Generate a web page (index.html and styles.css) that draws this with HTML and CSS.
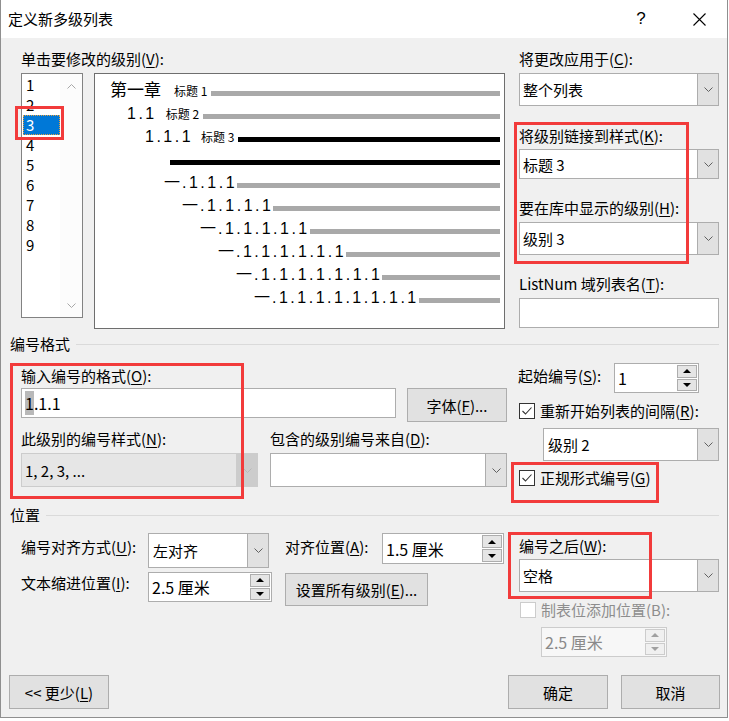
FILE: index.html
```html
<!DOCTYPE html>
<html lang="zh-CN">
<head>
<meta charset="utf-8">
<title>定义新多级列表</title>
<link rel="stylesheet" href="styles.css">
</head>
<body>
<div class="dialog">
  <div class="titlebar">
    <span class="title">定义新多级列表</span>
    <span class="help">?</span>
    <span class="close"><svg width="13" height="13" viewBox="0 0 13 13"><path d="M0.5 0.5L12.5 12.5M12.5 0.5L0.5 12.5" stroke="#000" stroke-width="1.1" fill="none"/></svg></span>
  </div>

  <section class="sec-a">
    <div class="a-left">
      <div class="lbl">单击要修改的级别(<u>V</u>):</div>
      <div class="a-boxes">
        <div class="levels">
          <ul class="level-items">
            <li>1</li><li>2</li><li class="sel">3</li><li>4</li><li>5</li><li>6</li><li>7</li><li>8</li><li>9</li>
          </ul>
          <div class="vscroll">
            <svg width="9" height="5" viewBox="0 0 9 5"><polyline points="0.5,4.5 4.5,0.5 8.5,4.5" fill="none" stroke="#a8a8a8" stroke-width="1"/></svg>
            <svg width="9" height="5" viewBox="0 0 9 5"><polyline points="0.5,0.5 4.5,4.5 8.5,0.5" fill="none" stroke="#a8a8a8" stroke-width="1"/></svg>
          </div>
        </div>
        <div class="preview">
          <div class="pv-row r1"><span class="pv-h1">第一章</span><span class="pv-tag t1">标题 1</span><i class="bar"></i></div>
          <div class="pv-row r2"><span class="pv-num">1.1</span><span class="pv-tag t2">标题 2</span><i class="bar"></i></div>
          <div class="pv-row r3"><span class="pv-num">1.1.1</span><span class="pv-tag t3">标题 3</span><i class="bar black"></i></div>
          <div class="pv-row r4"><i class="bar black"></i></div>
          <div class="pv-row r5"><span class="pv-num"><span class="yi">一</span>.1.1.1</span><i class="bar"></i></div>
          <div class="pv-row r6"><span class="pv-num"><span class="yi">一</span>.1.1.1.1</span><i class="bar"></i></div>
          <div class="pv-row r7"><span class="pv-num"><span class="yi">一</span>.1.1.1.1.1</span><i class="bar"></i></div>
          <div class="pv-row r8"><span class="pv-num"><span class="yi">一</span>.1.1.1.1.1.1</span><i class="bar"></i></div>
          <div class="pv-row r9"><span class="pv-num"><span class="yi">一</span>.1.1.1.1.1.1.1</span><i class="bar"></i></div>
          <div class="pv-row r10"><span class="pv-num"><span class="yi">一</span>.1.1.1.1.1.1.1.1</span><i class="bar"></i></div>
        </div>
      </div>
    </div>
    <div class="a-right">
      <div class="lbl">将更改应用于(<u>C</u>):</div>
      <div class="combo h33 mt5"><span class="val">整个列表</span><span class="cbtn"><svg width="9" height="5" viewBox="0 0 9 5"><polyline points="0.5,0.5 4.5,4.5 8.5,0.5" fill="none" stroke="#606060"/></svg></span></div>
      <div class="lbl mt21">将级别链接到样式(<u>K</u>):</div>
      <div class="combo h30 mt4"><span class="val">标题 3</span><span class="cbtn"><svg width="9" height="5" viewBox="0 0 9 5"><polyline points="0.5,0.5 4.5,4.5 8.5,0.5" fill="none" stroke="#606060"/></svg></span></div>
      <div class="lbl mt20">要在库中显示的级别(<u>H</u>):</div>
      <div class="combo h33 mt5"><span class="val">级别 3</span><span class="cbtn"><svg width="9" height="5" viewBox="0 0 9 5"><polyline points="0.5,0.5 4.5,4.5 8.5,0.5" fill="none" stroke="#606060"/></svg></span></div>
      <div class="lbl mt20">ListNum 域列表名(<u>T</u>):</div>
      <div class="input h30 mt5"></div>
    </div>
  </section>

  <div class="sec-head head-b">编号格式</div>

  <section class="sec-b">
    <div class="b-left">
      <div class="lbl">输入编号的格式(<u>O</u>):</div>
      <div class="b-row1">
        <div class="input fmt"><span class="hl">1</span>.1.1</div>
        <div class="btn font-btn">字体(<u>F</u>)...</div>
      </div>
      <div class="b-row2">
        <div class="lbl">此级别的编号样式(<u>N</u>):</div>
        <div class="lbl">包含的级别编号来自(<u>D</u>):</div>
        <div class="combo ro h34"><span class="val">1, 2, 3, ...</span><span class="cbtn"><svg width="9" height="5" viewBox="0 0 9 5"><polyline points="0.5,0.5 4.5,4.5 8.5,0.5" fill="none" stroke="#b8b8b8"/></svg></span></div>
        <div class="combo h34"><span class="val"></span><span class="cbtn"><svg width="9" height="5" viewBox="0 0 9 5"><polyline points="0.5,0.5 4.5,4.5 8.5,0.5" fill="none" stroke="#606060"/></svg></span></div>
      </div>
    </div>
    <div class="b-right">
      <div class="start-row">
        <div class="lbl">起始编号(<u>S</u>):</div>
        <div class="spin start-spin"><span class="val">1</span><span class="arr"><span class="ab"><i class="tri up"></i></span><span class="ab"><i class="tri down"></i></span></span></div>
      </div>
      <div class="chk-row mt10">
        <span class="cb"><svg width="14" height="14" viewBox="0 0 14 14"><polyline points="2.5,7 5.5,10 11.5,3.5" fill="none" stroke="#333" stroke-width="1.1"/></svg></span>
        <span class="lbl">重新开始列表的间隔(<u>R</u>):</span>
      </div>
      <div class="combo h33 restart-combo"><span class="val">级别 2</span><span class="cbtn"><svg width="9" height="5" viewBox="0 0 9 5"><polyline points="0.5,0.5 4.5,4.5 8.5,0.5" fill="none" stroke="#606060"/></svg></span></div>
      <div class="chk-row mt9">
        <span class="cb"><svg width="14" height="14" viewBox="0 0 14 14"><polyline points="2.5,7 5.5,10 11.5,3.5" fill="none" stroke="#333" stroke-width="1.1"/></svg></span>
        <span class="lbl">正规形式编号(<u>G</u>)</span>
      </div>
    </div>
  </section>

  <div class="sec-head head-c">位置</div>

  <section class="sec-c">
    <div class="c-left">
      <div class="lbl mt5">编号对齐方式(<u>U</u>):</div>
      <div class="combo align-combo"><span class="val">左对齐</span><span class="cbtn"><svg width="9" height="5" viewBox="0 0 9 5"><polyline points="0.5,0.5 4.5,4.5 8.5,0.5" fill="none" stroke="#606060"/></svg></span></div>
      <div class="lbl mt5">对齐位置(<u>A</u>):</div>
      <div class="spin pos-spin"><span class="val">1.5 厘米</span><span class="arr"><span class="ab"><i class="tri up"></i></span><span class="ab"><i class="tri down"></i></span></span></div>
      <div class="lbl mt2">文本缩进位置(<u>I</u>):</div>
      <div class="spin indent-spin"><span class="val">2.5 厘米</span><span class="arr"><span class="ab"><i class="tri up"></i></span><span class="ab"><i class="tri down"></i></span></span></div>
      <div class="btn all-btn">设置所有级别(<u>E</u>)...</div>
    </div>
    <div class="c-right">
      <div class="lbl mt4">编号之后(<u>W</u>):</div>
      <div class="combo h33 mt4"><span class="val">空格</span><span class="cbtn"><svg width="9" height="5" viewBox="0 0 9 5"><polyline points="0.5,0.5 4.5,4.5 8.5,0.5" fill="none" stroke="#606060"/></svg></span></div>
      <div class="chk-row mt10 disabled">
        <span class="cb"></span>
        <span class="lbl">制表位添加位置(B):</span>
      </div>
      <div class="spin tab-spin disabled"><span class="val">2.5 厘米</span><span class="arr"><span class="ab"><i class="tri up"></i></span><span class="ab"><i class="tri down"></i></span></span></div>
    </div>
  </section>

  <div class="footer">
    <div class="btn fbtn">&lt;&lt; 更少(<u>L</u>)</div>
    <div class="spacer"></div>
    <div class="btn fbtn">确定</div>
    <div class="btn fbtn cancel">取消</div>
  </div>

  <div class="mark m1"></div>
  <div class="mark m2"></div>
  <div class="mark m3"></div>
  <div class="mark m4"></div>
  <div class="mark m5"></div>
</div>
</body>
</html>
```

FILE: styles.css
```css
html, body {
  margin: 0;
  padding: 0;
  background: #ffffff;
}
body {
  font-family: "Noto Sans CJK SC", "Noto Sans", sans-serif;
  font-size: 15px;
  color: #000;
}
u { text-decoration-thickness: 1px; text-underline-offset: 2px; }

.dialog {
  position: relative;
  width: 728px;
  height: 718px;
  box-sizing: border-box;
  border: 1px solid #8f8f8f;
  border-top: none;
  background: #f0f0f0;
}

.titlebar {
  height: 38px;
  background: #fff;
  display: flex;
  align-items: center;
}
.title {
  flex: 1;
  padding-left: 7px;
  line-height: 18px;
}
.help {
  width: 46px;
  margin-right: 12px;
  text-align: center;
  font-family: "Liberation Sans", sans-serif;
  font-size: 17px;
  line-height: 18px;
}
.close {
  width: 46px;
  margin-right: 5px;
  display: flex;
  justify-content: center;
}

.lbl {
  line-height: 18px;
  height: 18px;
  white-space: nowrap;
}
.mt2 { margin-top: 2px; }
.mt4 { margin-top: 4px; }
.mt5 { margin-top: 5px; }
.mt9 { margin-top: 9px; }
.mt10 { margin-top: 10px; }
.mt20 { margin-top: 20px; }
.mt21 { margin-top: 21px; }
.h30 { height: 30px; }
.h33 { height: 33px; }
.h34 { height: 34px; }

/* ---------- generic controls ---------- */
.combo {
  display: flex;
  box-sizing: border-box;
  border: 1px solid #adadad;
  background: #fff;
}
.combo .val {
  flex: 1;
  display: flex;
  align-items: center;
  padding-left: 3px;
  white-space: nowrap;
}
.combo .cbtn {
  width: 20px;
  background: #e1e1e1;
  border-left: 1px solid #adadad;
  display: flex;
  align-items: center;
  justify-content: center;
}
.combo.ro {
  background: #e6e6e6;
  border-color: #cccccc;
}
.combo.ro .cbtn {
  background: #cccccc;
  border-left-color: #cccccc;
}
.input {
  box-sizing: border-box;
  border: 1px solid #adadad;
  background: #fff;
}
.btn {
  box-sizing: border-box;
  background: #e1e1e1;
  border: 1px solid #adadad;
  display: flex;
  align-items: center;
  justify-content: center;
  white-space: nowrap;
}
.spin {
  display: flex;
  box-sizing: border-box;
  border: 1px solid #adadad;
  background: #fff;
}
.spin .val {
  flex: 1;
  display: flex;
  align-items: center;
  padding-left: 3px;
  white-space: nowrap;
  font-size: 16px;
}
.spin .arr {
  width: 20px;
  display: flex;
  flex-direction: column;
  gap: 1px;
  padding: 1px 1px 1px 0;
}
.spin .ab {
  flex: 1;
  box-sizing: border-box;
  background: #e5e5e5;
  border: 1px solid #adadad;
  display: flex;
  align-items: center;
  justify-content: center;
}
.tri {
  display: block;
  width: 0;
  height: 0;
  border-left: 4px solid transparent;
  border-right: 4px solid transparent;
}
.tri.up { border-bottom: 4px solid #000; }
.tri.down { border-top: 4px solid #000; }

.cb {
  width: 16px;
  height: 16px;
  box-sizing: border-box;
  border: 1px solid #333;
  background: #fff;
  display: flex;
  align-items: center;
  justify-content: center;
}
.chk-row {
  display: flex;
  align-items: center;
  gap: 5px;
  height: 16px;
  padding-left: 1px;
}
.chk-row.disabled .cb { border-color: #cccccc; }
.chk-row.disabled .lbl { color: #8d8d8d; }

/* ---------- section A ---------- */
.sec-a {
  display: flex;
  padding: 12px 0 0 20px;
}
.a-left { width: 484px; }
.a-left > .lbl { margin-bottom: 5px; }
.a-boxes {
  display: flex;
  gap: 11px;
}
.levels {
  width: 62px;
  height: 245px;
  box-sizing: border-box;
  border: 1px solid #828282;
  background: #fff;
  display: flex;
}
.level-items {
  list-style: none;
  margin: 0;
  padding: 1px 0 0 0;
  width: 38px;
}
.level-items li {
  height: 20px;
  line-height: 20px;
  width: 37px;
  margin-left: 1px;
  padding-left: 3px;
  box-sizing: border-box;
  font-size: 15px;
}
.level-items li.sel {
  background: #0078d7;
  color: #fff;
  outline: 1px dotted #e8a040;
  outline-offset: -1px;
}
.vscroll {
  flex: 1;
  display: flex;
  flex-direction: column;
  justify-content: space-between;
  align-items: center;
  padding: 10px 0 9px;
  background: #fcfcfc;
}

.preview {
  width: 411px;
  height: 256px;
  box-sizing: border-box;
  border: 1px solid #6e6e6e;
  background: #fff;
  padding: 0 4px 0 0;
}
.pv-row {
  height: 23px;
  display: flex;
  align-items: flex-end;
  white-space: nowrap;
}
.bar {
  flex: 1;
  height: 5px;
  margin-bottom: 1px;
  background: #a9a9a9;
}
.bar.black { background: #000; }
.pv-h1 {
  font-size: 17px;
  line-height: 17px;
}
.pv-tag {
  font-size: 12px;
  line-height: 12px;
  margin-right: 4px;
}
.pv-num {
  font-family: "Liberation Sans", "Noto Sans CJK SC", sans-serif;
  font-size: 16px;
  line-height: 13px;
  letter-spacing: 2.5px;
}
.pv-num .yi {
  font-family: "Noto Sans CJK SC", sans-serif;
  letter-spacing: 0;
  margin-right: 2px;
}
.r1 { padding-left: 15px; }
.r2 { padding-left: 32px; }
.r3 { padding-left: 50px; }
.r4 { padding-left: 75px; }
.r5 { padding-left: 69px; }
.r6 { padding-left: 87px; }
.r7 { padding-left: 105px; }
.r8 { padding-left: 123px; }
.r9 { padding-left: 141px; }
.r10 { padding-left: 159px; }
.t1 { margin-left: 13px; }
.t2 { margin-left: 9px; }
.t3 { margin-left: 8px; }

.a-right {
  width: 200px;
  margin-left: 14px;
  display: flex;
  flex-direction: column;
}

/* ---------- section headers ---------- */
.sec-head {
  display: flex;
  align-items: center;
  height: 18px;
  line-height: 18px;
  padding: 0 8px 0 9px;
}
.sec-head::after {
  content: "";
  flex: 1;
  border-top: 1px solid #dadada;
  margin-left: 6px;
}
.head-b { margin-top: 6px; }
.head-c { margin-top: 19px; }

/* ---------- section B ---------- */
.sec-b {
  display: flex;
  padding-left: 20px;
  margin-top: 10px;
}
.b-left {
  width: 486px;
  padding-top: 4px;
}
.b-row1 {
  display: flex;
  gap: 11px;
  align-items: flex-start;
  margin-top: 3px;
}
.input.fmt {
  width: 375px;
  height: 30px;
  display: flex;
  align-items: center;
  padding-left: 3px;
  font-size: 16px;
}
.hl { background: #b9b9b9; }
.font-btn {
  width: 100px;
  height: 34px;
}
.b-row2 {
  display: grid;
  grid-template-columns: 237px 237px;
  column-gap: 12px;
  row-gap: 5px;
  margin-top: 8px;
}
.b-right {
  width: 201px;
  margin-left: 11px;
}
.start-row {
  display: flex;
  align-items: flex-start;
  height: 30px;
}
.start-row .lbl {
  width: 96px;
  margin-top: 4px;
}
.start-spin {
  width: 85px;
  height: 30px;
}
.restart-combo {
  margin-top: 9px;
  margin-left: 25px;
  width: 176px;
}
.restart-combo .val { padding-left: 4px; }

/* ---------- section C ---------- */
.sec-c {
  display: flex;
  padding-left: 20px;
  margin-top: 9px;
}
.c-left {
  width: 483px;
  display: grid;
  grid-template-columns: 127px 137px 97px 122px;
  grid-template-rows: 35px 34px;
  row-gap: 4px;
  align-items: start;
}
.align-combo {
  width: 121px;
  height: 35px;
}
.align-combo .val { padding-left: 4px; }
.pos-spin {
  width: 122px;
  height: 31px;
}
.indent-spin {
  width: 124px;
  height: 30px;
}
.all-btn {
  grid-column: 3 / span 2;
  justify-self: start;
  width: 143px;
  height: 33px;
  margin-top: 1px;
}
.c-right {
  width: 200px;
  margin-left: 15px;
}
.tab-spin {
  margin-top: 9px;
  margin-left: 22px;
  width: 126px;
  height: 30px;
}
.spin.disabled {
  border-color: #cccccc;
  background: #f7f7f7;
}
.spin.disabled .val { color: #8a8a8a; }
.spin.disabled .ab {
  background: #f0f0f0;
  border-color: #cccccc;
}
.spin.disabled .tri.up { border-bottom-color: #a0a0a0; }
.spin.disabled .tri.down { border-top-color: #a0a0a0; }

/* ---------- footer ---------- */
.footer {
  display: flex;
  padding: 0 7px 0 8px;
  margin-top: 18px;
}
.spacer { flex: 1; }
.fbtn {
  width: 100px;
  height: 34px;
}
.fbtn.cancel {
  width: 99px;
  margin-left: 13px;
}

/* ---------- red annotation frames ---------- */
.mark {
  position: absolute;
  box-sizing: border-box;
  border: 3px solid #f23b3b;
  pointer-events: none;
}
.m1 { left: 14px; top: 106px; width: 49px; height: 34px; }
.m2 { left: 513px; top: 122px; width: 175px; height: 142px; }
.m3 { left: 9px; top: 363px; width: 234px; height: 136px; }
.m4 { left: 510px; top: 462px; width: 148px; height: 41px; }
.m5 { left: 507px; top: 532px; width: 144px; height: 67px; }
```
